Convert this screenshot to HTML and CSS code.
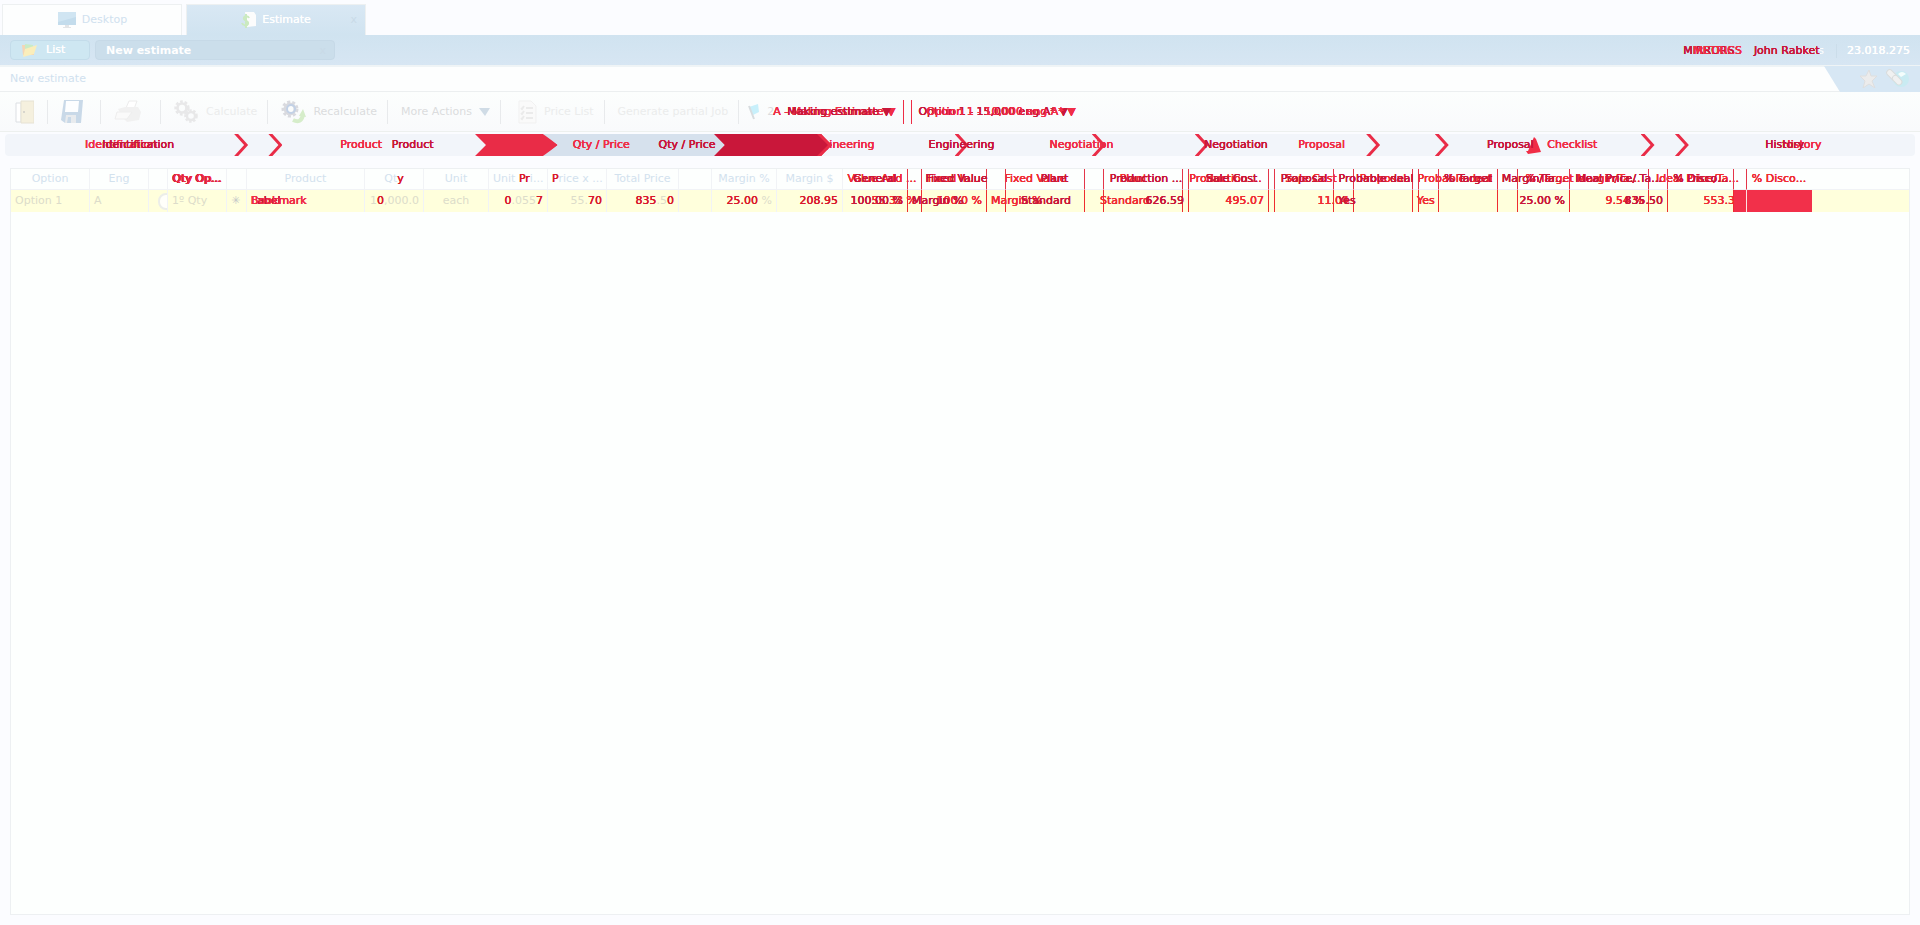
FILE: index.html
```
<!DOCTYPE html>
<html lang="en">
<head>
<meta charset="utf-8">
<title>New estimate</title>
<link rel="stylesheet" href="styles.css">
</head>
<body>
<nav class="tabs">
  <a class="tab" href="#desktop"><svg width="20" height="18" viewBox="0 0 20 18"><path d="M1 1h18v13H1z" fill="#c3dcec"/><path d="M1 1h18v5L1 11z" fill="#d0e5f2"/><path d="M8 14h4v2h2v1H6v-1h2z" fill="#e3e5e7"/></svg>Desktop</a>
  <a class="tab on" href="#estimate"><svg width="16" height="18" viewBox="0 0 16 18"><path d="M4 1h9l2 3v11l-9 1z" fill="#fcfcfc"/><path d="M8 7C7 4 2 5 3 8c1 2 5 2 4 5-1 2-5 2-6-1M5 3v14" fill="none" stroke="#cbeac0" stroke-width="2"/></svg>Estimate<span class="close">x</span></a>
</nav>
<header class="bar">
  <button class="list"><svg width="16" height="14" viewBox="0 0 16 14"><path d="M1 2h5l1 2h6v8H2z" fill="#f4d5b5"/><path d="M4 1l8 1v6H4z" fill="#c9ebc6"/><path d="M4 6l12-4-3 9-11 3z" fill="#faeebb"/></svg>List</button>
  <div class="doc">New estimate<span class="close">x</span></div>
  <div class="user">
    <span class="dup"><span class="dk">MIRRORS</span><span class="br s10">METRICS</span></span>
    <span class="dup"><span class="gh">John Rockets</span><span class="dk">John Rabket</span></span>
    <span class="ver">23.018.275</span>
  </div>
</header>
<div class="crumb">
  <span>New estimate</span>
  <div class="corner">
    <svg width="18" height="18" viewBox="0 0 18 18"><path d="M9 0l2 6 6 0-5 5 3 7-6-4-6 4 2-7-5-5 6 0z" fill="#ececec" stroke="#dedede" stroke-width="1"/></svg>
    <svg width="24" height="20" viewBox="0 0 24 20"><circle cx="15" cy="10" r="8" fill="#c9ebf2"/><path d="M12 5q4-4 8 0l-5 3z" fill="#f4fdfc"/><g transform="rotate(45 3 3)" fill="#f0f1f1" stroke="#d9dcdc" stroke-width="1"><rect x="1" y="0" width="12" height="6" rx="3"/><rect x="9" y="0" width="11" height="6" rx="3"/></g></svg>
  </div>
</div>
<svg class="defs" width="0" height="0"><defs>
  <g id="gear"><circle cx="0" cy="0" r="5" fill="none" stroke-width="3"/><circle cx="0" cy="0" r="7" fill="none" stroke-width="3" stroke-dasharray="3 2"/></g>
</defs></svg>
<div class="tools">
  <button class="tool" aria-label="Exit"><svg width="19" height="24" viewBox="0 0 19 24"><path d="M1 3h5v19H1z" fill="#fff" stroke="#dcdfe3"/><path d="M6 1h13v22H6z" fill="#f5f0de"/><path d="M6 1h13v22H6z" fill="none" stroke="#e6e2d4"/><path d="M8 12h2" stroke="#bbb"/></svg></button>
  <button class="tool" aria-label="Save"><svg width="26" height="24" viewBox="0 0 26 24"><path d="M3 0h19l-2 23H4l-4-3z" fill="#c9d9e8"/><path d="M5 1h13l-1 11H4z" fill="#fdfeff"/><path d="M5 15h10v8H4z" fill="#e8ebee"/><path d="M7 17h3v6H6z" fill="#c9d9e8"/></svg></button>
  <button class="tool" aria-label="Print"><svg width="33" height="24" viewBox="0 0 33 24"><path d="M12 8l3-7h8l-3 8z" fill="#fff" stroke="#ececec"/><path d="M4 9l7-2h13l3 5-2 8-12 2-4-4z" fill="#f1f1f1"/><path d="M3 12h15l-5 7H1z" fill="#fafafa" stroke="#eee"/></svg></button>
  <button class="tool off"><svg width="25" height="24" viewBox="0 0 25 24" stroke="#e8e8e9"><use href="#gear" transform="translate(8 8) scale(.9)"/><use href="#gear" transform="translate(17 16) scale(.8)"/></svg>Calculate</button>
  <button class="tool"><svg width="25" height="24" viewBox="0 0 25 24"><use href="#gear" stroke="#d9dadf" transform="translate(9 9)"/><circle cx="10" cy="9" r="4" fill="none" stroke="#c2d1e6" stroke-width="2"/><path d="M12 20q8 4 10-5" fill="none" stroke="#d6edca" stroke-width="4"/><path d="M18 16l4-7 3 8z" fill="#d6edca"/></svg>Recalculate</button>
  <button class="tool">More Actions<svg width="11" height="8" viewBox="0 0 11 8"><path d="M0 0h11L6 8z" fill="#d0dce6"/></svg></button>
  <button class="tool off wide"><svg width="19" height="24" viewBox="0 0 19 24"><path d="M1 1h12l5 5v17H1z" fill="#fafafa" stroke="#f1f1f1"/><path d="M3 8l1 1 2-3M8 8h7M3 13l1 1 2-3M8 13h7M3 18l1 1 2-3M8 18h7" fill="none" stroke="#ebebeb" stroke-width="2"/></svg>Price List</button>
  <button class="tool off">Generate partial Job</button>
  <div class="tool state"><svg width="14" height="16" viewBox="0 0 14 16"><path d="M1 3l9-3 1 8-6 3z" fill="#c8f0fb"/><path d="M1 2l5 13" stroke="#d7dcdf" stroke-width="2"/></svg>
    <span class="dup"><span class="two">2</span><span class="br s6">A - Making Estimate ▼</span><span class="dk s20">Making estimate ▼</span></span></div>
  <div class="tool option"><span class="dup"><span class="dk">Option 1 - 15,000 eng A* ▼</span><span class="br s8">Option 1 - 10,000 eng A* ▼</span></span></div>
</div>
<div class="stages">
  <div class="flow br">
    <span>Identification</span><i></i><span>Product</span><i></i><span class="active">Qty / Price</span><i></i><span>Engineering</span><i></i><span>Negotiation</span><i></i><span>Proposal</span><i></i><span class="warn"><svg width="16" height="17" viewBox="0 0 16 17"><path d="M8 0l2 2 5 13-13 2-2-3h2z" fill="#f02d46"/></svg>Checklist</span><i></i><span>History</span>
  </div>
  <div class="flow dk">
    <span>Identification</span><i></i><span>Product</span><i></i><span class="active">Qty / Price</span><i></i><span>Engineering</span><i></i><span>Negotiation</span><i></i><span>Proposal</span><i></i><span>History</span>
  </div>
  <svg class="fill" viewBox="0 0 357 22" preserveAspectRatio="none"><path d="M0 0H68L83 11 68 22H0L11 11z" fill="#e92c47"/><path d="M68 0H239L250 11 239 22H68L83 11z" fill="#d6e1ed"/><path d="M239 0H345L357 11 345 22H239L250 11z" fill="#c9173a"/><path d="M342 0h4l11 11-11 11h-4l11-11z" fill="#e92c47"/></svg>
</div>
<main class="panel">
  <table class="base">
    <colgroup><col class="w79"><col class="w59"><col class="w19"><col class="w59"><col class="w20"><col class="w118"><col class="w59"><col class="w65"><col class="w59"><col class="w59"><col class="w72"><col class="w33"><col class="w65"><col class="w66"><col></colgroup>
    <thead><tr><th>Option</th><th>Eng</th><th></th><th><span class="dup"><span class="dk">Qty Op...</span><span class="br s1">Qty Op...</span></span></th><th></th><th>Product</th><th>Qt<b>y</b></th><th>Unit</th><th>Unit <b>Pr</b>i...</th><th><b>P</b>rice x ...</th><th>Total Price</th><th></th><th>Margin %</th><th>Margin $</th><th></th></tr></thead>
    <tbody><tr><td>Option 1</td><td>A</td><td class="ring"><input type="radio" name="row" aria-label="Option 1"></td><td>1º Qty</td><td class="star">✳</td><td><span class="dup"><span class="dk">Label</span><span class="br">Bookmark</span></span></td><td class="r">1<b>0</b>,000.0</td><td class="c">each</td><td class="r"><b>0</b>.055<b>7</b></td><td class="r">55.<b>70</b></td><td class="r"><b>835</b>.5<b>0 </b></td><td></td><td class="r"><b>25.00</b> %</td><td class="r"><b>208.95</b></td><td></td></tr></tbody>
  </table>
  <table class="layer br">
    <colgroup><col class="w79"><col class="w65"><col class="w98"><col class="w98"><col class="w86"><col class="w85"><col class="w59"><col class="w85"><col class="w20"><col class="w131"><col class="w98"><col class="w65"></colgroup>
    <thead><tr><th>Value Add ...</th><th>Fixed In...</th><th>Fixed Value</th><th>Plant</th><th>Production ...</th><th>Sale Cost</th><th>Proposal</th><th>Probable deal</th><th></th><th>% Target Margin/Ta...</th><th>Ideal Price/Ta...</th><th>% Disco...</th></tr></thead>
    <tbody><tr><td class="r">55.33 %</td><td class="r">100.0 %</td><td>Margin %</td><td class="in">Standard</td><td class="r">495.07</td><td class="r">11.04</td><td></td><td>Yes</td><td></td><td class="r">9.54 %</td><td class="r">553.37</td><td class="block"></td></tr></tbody>
  </table>
  <table class="layer dk">
    <colgroup><col class="w65"><col class="w98"><col class="w98"><col class="w85"><col class="w86"><col class="w59"><col class="w85"><col class="w20"><col class="w59"><col class="w72"><col class="w98"><col class="w66"><col class="w13"></colgroup>
    <thead><tr><th>General</th><th>Fixed Value</th><th>Plant</th><th>Production ...</th><th>Sale Cost</th><th>Proposal</th><th>Probable deal</th><th></th><th>% Target</th><th>Margin/Ta...</th><th>Ideal Price/ Ta...</th><th>% Disco...</th><th class="end"></th></tr></thead>
    <tbody><tr><td class="r">100.00 %</td><td>Margin %</td><td class="in">Standard</td><td class="r">626.59</td><td></td><td></td><td>Yes</td><td></td><td></td><td class="r">25.00 %</td><td class="r">835.50</td><td></td><td class="block end"></td></tr></tbody>
  </table>
</main>
</body>
</html>
```
FILE: styles.css
```
* { box-sizing: border-box; }
body {
  margin: 0; min-height: 100vh; display: flex; flex-direction: column;
  background: #fbfcff; color: #dbdcde;
  font: 11px/14px "DejaVu Sans", sans-serif;
}
button { font: inherit; color: inherit; background: none; border: 0; padding: 0; }
svg { flex: none; }
.defs { position: absolute; }
.dk { color: #c9173a; text-shadow: 0 0 0 #c9173a, 0 0 0 #c9173a, 0 0 0 #c9173a; }
.br { color: #f02d46; text-shadow: 0 0 0 #f02d46, 0 0 0 #f02d46, 0 0 0 #f02d46; }
.dup { display: inline-grid; white-space: pre; text-align: left; }
.dup > * { grid-area: 1 / 1; }
.s1 { padding-left: 1px; }
.s6 { padding-left: 6px; }
.s8 { padding-left: 8px; }
.s10 { padding-left: 10px; }
.s20 { padding-left: 20px; }

.tabs { display: flex; gap: 4px; padding: 4px 2px 0; height: 35px; }
.tab {
  position: relative; width: 180px; display: flex; align-items: center; justify-content: center; gap: 5px;
  border: 1px solid #edf0f1; border-bottom: 0; background: #fdfefe; color: #d0e1ef; text-decoration: none;
}
.tab.on { background: linear-gradient(#d9e8f4, #d0e3f0); color: #fff; text-shadow: 0 0 0 #fff; }
.close { position: absolute; right: 8px; color: #c9dae7; text-shadow: none; font-weight: normal; }
.bar {
  display: flex; align-items: center; gap: 5px; height: 30px; padding: 0 10px;
  background: linear-gradient(#d0e3f0, #d7e6f3); color: #fff;
}
.list {
  width: 80px; height: 20px; display: flex; align-items: center; gap: 9px; padding-left: 10px;
  background: #cee7f2; border: 1px solid #c3dcea; border-radius: 4px; text-shadow: 0 0 0 #fff;
}
.doc {
  position: relative; width: 240px; height: 20px; padding: 3px 10px; font-weight: bold;
  background: #cbdeeb; border: 1px solid #c6d9e7; border-radius: 4px;
}
.user { margin-left: auto; padding-top: 1px; display: flex; gap: 12px; }
.user .ver { padding-left: 10px; border-left: 1px solid #cbddea; text-shadow: 0 0 0 #fff, 0 0 0 #fff; }
.crumb {
  display: flex; justify-content: space-between; height: 27px; align-items: center; padding-left: 10px;
  color: #d0e1ef; border-top: 2px solid #eff4f6; border-bottom: 1px solid #eceff0; background: #fdfefe;
}
.corner {
  width: 96px; height: 26px; display: flex; align-items: center; gap: 8px; padding-left: 36px;
  background: #d7e7f4; clip-path: polygon(0 0, 100% 0, 100% 100%, 16px 100%);
}
.tools {
  display: flex; align-items: center; height: 40px; padding-left: 2px;
  background: linear-gradient(#fcfefd, #f9fafc); border-bottom: 1px solid #edf0ee;
}
.tool {
  flex: none; display: flex; align-items: center; gap: 7px; height: 24px; padding: 1px 10px 0 13px;
  border-right: 1px solid #e8eaec; white-space: nowrap;
}
.off { color: #ebecec; }
.wide { padding-left: 17px; }
.state { gap: 5px; padding-left: 9px; padding-right: 8px; border-color: #ee2c45; }
.option { padding-left: 6px; margin-left: 7px; border-left: 1px solid #ee2c45; border-right: 0; }
.tool:nth-child(-n+3) { padding-right: 13px; }

.stages {
  position: relative; height: 22px; margin: 2px 5px 0; border-radius: 4px; background: #f2f5fa;
}
.flow { position: absolute; inset: 0; display: flex; padding-left: 3px; line-height: 22px; }
.flow span { flex: 1 1 0; min-width: 0; text-align: center; }
.flow .active { position: relative; z-index: 1; }
.flow .warn { display: flex; justify-content: center; align-items: center; gap: 5px; }
.flow i {
  flex: none; width: 14px; background: #e92c47;
  clip-path: polygon(0 0, 4px 0, 100% 50%, 4px 100%, 0 100%, 10px 50%);
}
.flow.br i:nth-of-type(2) { visibility: hidden; }
.fill { position: absolute; left: 24.6%; top: 0; width: 357px; height: 22px; }

.panel {
  position: relative; flex: 1; margin: 12px 10px 10px;
  border: 1px solid #edf0f2; background: #fdfffe;
}
table { border-collapse: separate; border-spacing: 0; table-layout: fixed; white-space: nowrap; }
th, td { padding: 0 4px; overflow: hidden; border-right: 1px solid #f1f3f6; }
th { height: 21px; font-weight: normal; border-bottom: 1px solid #f1f3f6; }
td { height: 22px; }
.base { width: 100%; color: #d3e2ee; }
.base td { background: #ffffdc; color: #dcdcca; }
.base th:last-child, .base td:last-child { border-right: 0; }
.base .star { color: #c4c8c8; }
b { font-weight: normal; color: #d9182c; text-shadow: 0 0 0 #d9182c, 0 0 0 #d9182c; }
.r { text-align: right; }
.c { text-align: center; }
td.in { padding-left: 15px; }
td.ring { padding: 0 0 0 9px; }
.ring input {
  appearance: none; display: block; margin: 0; width: 17px; height: 17px;
  border: 2px solid #eceee9; border-radius: 8px; background: #fffffa;
}
.layer { position: absolute; left: 832px; top: 0; width: 0; }
.layer th { padding: 0; border-bottom-color: transparent; border-right-color: #e4364a; }
.layer td { border-right-color: #ee2c30; }
.layer.br { color: #f02d2e; }
.layer .block { background: #f2304a; border-right-color: #f2304a; }
.layer th:last-child { border-right-color: transparent; }
.layer .block.end { border-right-color: #fbe4e4; }
.w13 { width: 13px; }
.w19 { width: 19px; }
.w20 { width: 20px; }
.w33 { width: 33px; }
.w59 { width: 59px; }
.w65 { width: 65px; }
.w66 { width: 66px; }
.w72 { width: 72px; }
.w79 { width: 79px; }
.w85 { width: 85px; }
.w86 { width: 86px; }
.w98 { width: 98px; }
.w118 { width: 118px; }
.w131 { width: 131px; }
```
